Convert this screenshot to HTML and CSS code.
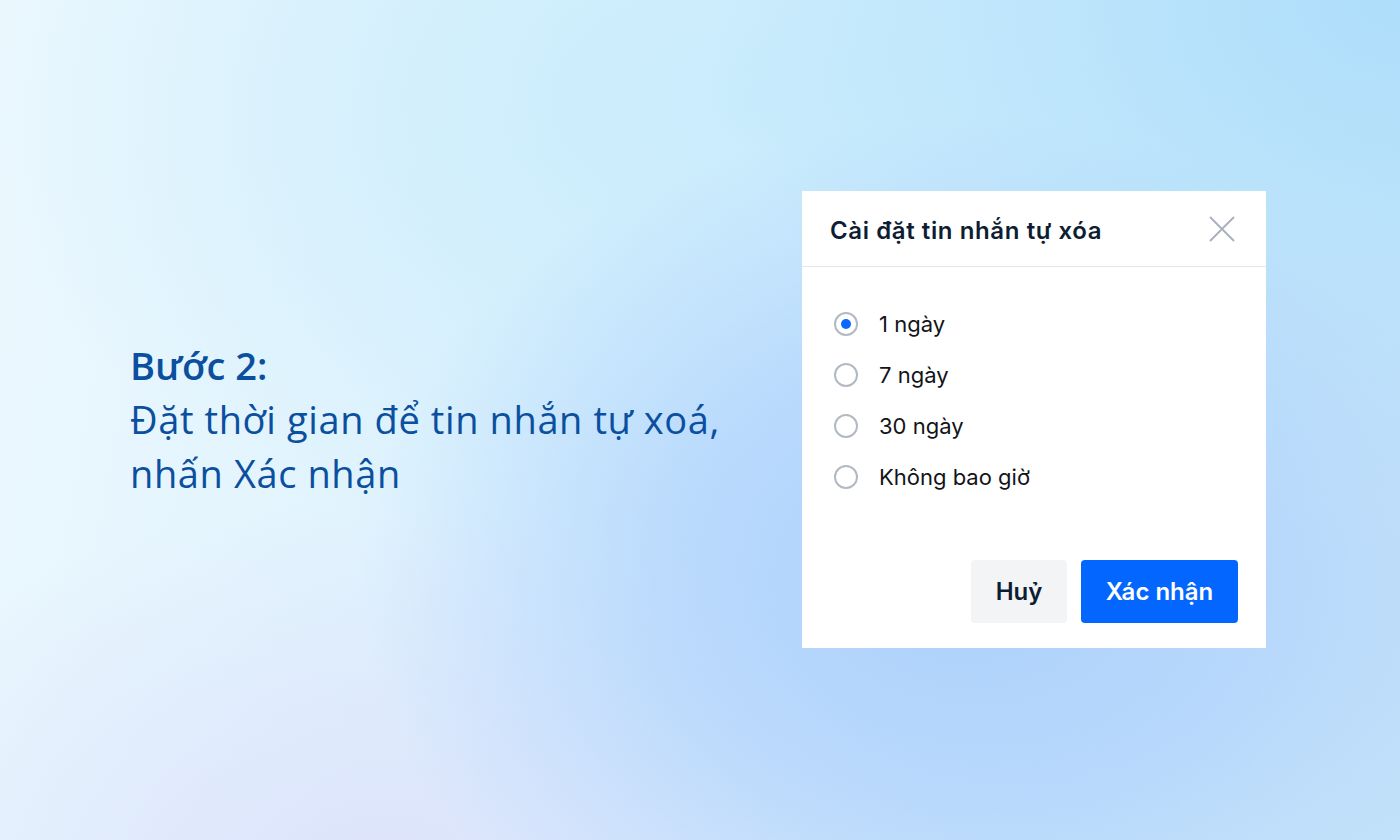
FILE: index.html
```html
<!DOCTYPE html>
<html lang="vi">
<head>
<meta charset="utf-8">
<link rel="stylesheet" href="styles.css">
</head>
<body>
<main class="page">
  <section class="intro">
    <h1 class="step">Bước 2:</h1>
    <p class="desc">Đặt thời gian để tin nhắn tự xoá,<br>nhấn Xác nhận</p>
  </section>
  <div class="dialog">
    <header class="dialog-head">
      <h2 class="dialog-title">Cài đặt tin nhắn tự xóa</h2>
      <button class="close" aria-label="Đóng">
        <svg width="28" height="28" viewBox="0 0 28 28"><path d="M2 2L26 26M26 2L2 26" stroke="#aab2bd" stroke-width="2" fill="none"/></svg>
      </button>
    </header>
    <ul class="options">
      <li class="option"><span class="radio checked"></span><span>1 ngày</span></li>
      <li class="option"><span class="radio"></span><span>7 ngày</span></li>
      <li class="option"><span class="radio"></span><span>30 ngày</span></li>
      <li class="option"><span class="radio"></span><span>Không bao giờ</span></li>
    </ul>
    <footer class="actions">
      <button class="btn btn-cancel">Huỷ</button>
      <button class="btn btn-ok">Xác nhận</button>
    </footer>
  </div>
</main>
</body>
</html>
```
FILE: styles.css
```css
html, body {
  margin: 0;
  padding: 0;
}
body {
  width: 1400px;
  height: 840px;
  overflow: hidden;
  background:
    radial-gradient(ellipse 600px 460px at 960px 580px, #acd0fc 0%, rgba(172,208,252,0.65) 50%, rgba(172,208,252,0) 100%),
    radial-gradient(ellipse 700px 500px at 1400px 0px, #aedefb 0%, rgba(174,222,251,0) 100%),
    radial-gradient(ellipse 600px 380px at 380px 880px, #dde3fb 0%, rgba(221,227,251,0) 100%),
    radial-gradient(ellipse 800px 480px at 760px 100px, #c9ecfc 0%, rgba(201,236,252,0) 100%),
    linear-gradient(100deg, #ecf8fe 0%, #dbf1fd 45%, #c4e3f9 100%);
}
.page {
  height: 840px;
  display: flex;
  align-items: flex-start;
  font-family: Inter, "Noto Sans", sans-serif;
}
.intro {
  margin: 338px 0 0 130px;
  width: 672px;
  color: #0b4f9f;
  font-family: "Open Sans", sans-serif;
}
.step {
  margin: 0;
  font-size: 38px;
  font-weight: 600;
  line-height: 54px;
}
.desc {
  margin: 0;
  font-size: 38px;
  font-weight: 400;
  line-height: 54px;
  letter-spacing: 0.6px;
}
.dialog {
  margin-top: 191px;
  width: 464px;
  height: 457px;
  background: #fff;
  display: flex;
  flex-direction: column;
}
.dialog-head {
  height: 75px;
  border-bottom: 1px solid #e4e7ec;
  display: flex;
  align-items: center;
  justify-content: space-between;
  padding: 0 30px 0 28px;
}
.dialog-title {
  margin: 0;
  padding-top: 4px;
  font-size: 24px;
  font-weight: 600;
  color: #0e1d33;
  letter-spacing: 0.6px;
}
.close {
  border: 0;
  background: none;
  padding: 0;
  width: 28px;
  height: 28px;
  display: flex;
}
.options {
  list-style: none;
  margin: 0;
  padding: 45px 0 0 32px;
  display: flex;
  flex-direction: column;
  gap: 27px;
  flex: 1;
}
.option {
  display: flex;
  align-items: center;
  gap: 21px;
  height: 24px;
  font-size: 22px;
  color: #121418;
}
.radio {
  box-sizing: border-box;
  width: 24px;
  height: 24px;
  border-radius: 50%;
  border: 2px solid #b2b9c3;
  display: flex;
  align-items: center;
  justify-content: center;
}
.radio.checked::after {
  content: "";
  width: 10px;
  height: 10px;
  border-radius: 50%;
  background: #0a68ff;
}
.actions {
  display: flex;
  justify-content: flex-end;
  gap: 14px;
  padding: 0 28px 25px 0;
}
.btn {
  height: 63px;
  border: 0;
  border-radius: 4px;
  font-family: Inter, "Noto Sans", sans-serif;
  font-size: 24px;
  font-weight: 600;
  padding: 0;
}
.btn-cancel {
  width: 96px;
  background: #f3f4f6;
  color: #0e1d33;
}
.btn-ok {
  width: 157px;
  background: #0366ff;
  color: #fff;
}
```
